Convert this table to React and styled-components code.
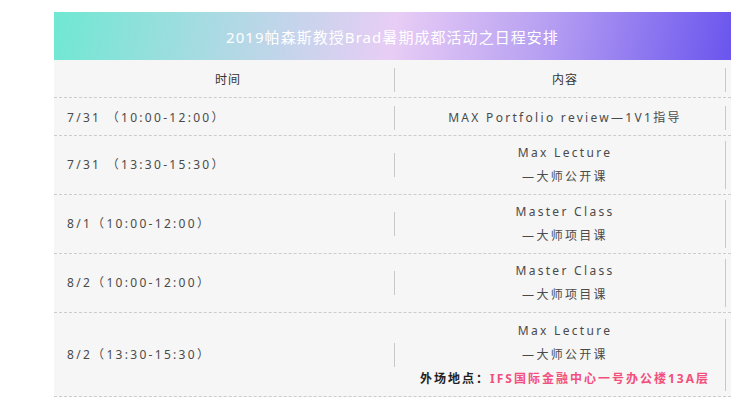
import React from "react";
import styled, { createGlobalStyle } from "styled-components";

const Global = createGlobalStyle`
  html, body { margin: 0; padding: 0; background: #ffffff; }
  body { font-family: "Noto Sans", "Noto Sans CJK SC", sans-serif; }
`;

const Page = styled.div`
  padding: 12px 10px 0 54px;
  width: 677px;
`;

const Title = styled.div`
  height: 48px;
  display: flex;
  align-items: center;
  justify-content: center;
  background: linear-gradient(100deg, #6fe8d2 0%, #b4d8e6 28%, #e8cdf5 50%, #b7a0f2 72%, #6a55ee 100%);
  color: #ffffff;
  font-size: 15px;
  letter-spacing: 1.05px;
  font-family: "Noto Sans", "Noto Sans CJK SC", sans-serif;
`;

const Table = styled.div`
  background: #f6f6f6;
`;

const Row = styled.div`
  display: grid;
  grid-template-columns: 341px 1fr;
  align-items: center;
  min-height: ${(p) => p.$min}px;
  border-bottom: 1px dashed #cccccc;
  box-sizing: border-box;
  padding-top: ${(p) => p.$shift || 0}px;
`;

const LeftCell = styled.div`
  padding: 5px 0 5px 8px;
`;

const RightCell = styled.div`
  padding: 5px 5px 5px 10px;
`;

const CellText = styled.div`
  border-right: 1px solid #c8c8c8;
  line-height: 24px;
  font-size: 12px;
  letter-spacing: ${(p) => (p.$head ? "1px" : "2.3px")};
  color: ${(p) => (p.$head ? "#333333" : "#4a4a4a")};
  text-align: ${(p) => (p.$left ? "left" : "center")};
  padding-left: ${(p) => (p.$left ? "5px" : "0")};
`;

const Line = styled.div`
  white-space: nowrap;
`;

const Place = styled.div`
  white-space: nowrap;
  font-weight: 700;
  color: #222222;
  letter-spacing: 2px;
`;

const Pink = styled.span`
  color: #f24f7d;
`;

const rows = [
  { time: "7/31 （10:00-12:00）", lines: ["MAX Portfolio review—1V1指导"], min: 38, shift: 3 },
  { time: "7/31 （13:30-15:30）", lines: ["Max Lecture", "—大师公开课"], min: 59 },
  { time: "8/1（10:00-12:00）", lines: ["Master Class", "—大师项目课"], min: 59 },
  { time: "8/2（10:00-12:00）", lines: ["Master Class", "—大师项目课"], min: 59 },
  { time: "8/2（13:30-15:30）", lines: ["Max Lecture", "—大师公开课"], min: 84, place: true },
];

export default function App() {
  return (
    <>
      <Global />
      <Page>
        <Title>2019帕森斯教授Brad暑期成都活动之日程安排</Title>
        <Table>
          <Row $min={38} $shift={2}>
            <LeftCell>
              <CellText $head>时间</CellText>
            </LeftCell>
            <RightCell>
              <CellText $head>内容</CellText>
            </RightCell>
          </Row>
          {rows.map((r, i) => (
            <Row key={i} $min={r.min} $shift={r.shift}>
              <LeftCell>
                <CellText $left>{r.time}</CellText>
              </LeftCell>
              <RightCell>
                <CellText>
                  {r.lines.map((l, j) => (
                    <Line key={j}>{l}</Line>
                  ))}
                  {r.place && (
                    <Place>
                      外场地点：<Pink>IFS国际金融中心一号办公楼13A层</Pink>
                    </Place>
                  )}
                </CellText>
              </RightCell>
            </Row>
          ))}
        </Table>
      </Page>
    </>
  );
}
